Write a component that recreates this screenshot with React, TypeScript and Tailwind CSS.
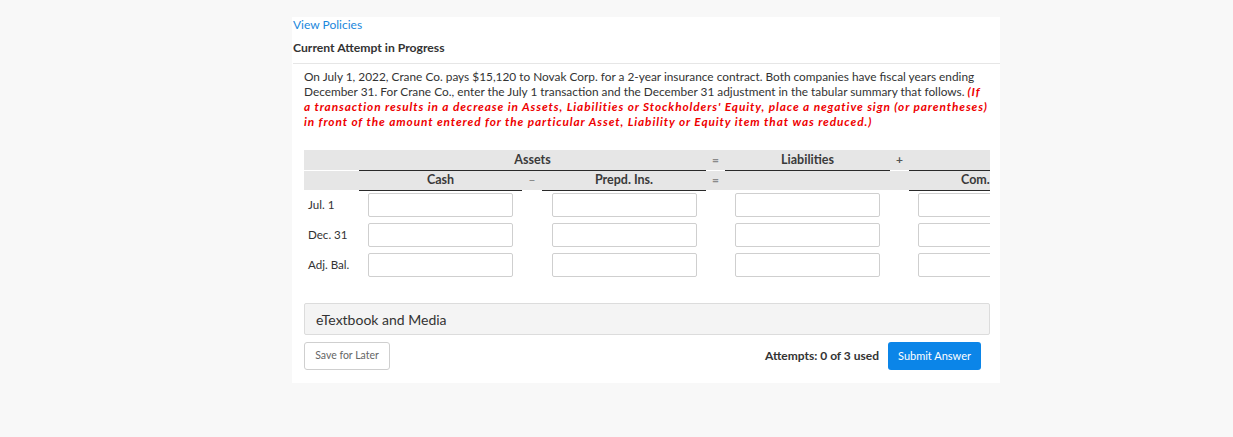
import React from 'react';

// Tabular summary grid: label | Cash | op | Prepd | op | Liabilities | op | Com.
const cols = 'grid grid-cols-[55px_163px_20px_164px_19px_165px_19px_163px]';

const rows = ['Jul. 1', 'Dec. 31', 'Adj. Bal.'];

const Op: React.FC<{ sym: string; tone?: string }> = ({ sym, tone = 'text-[#8a8a8a]' }) => (
  <div className={`flex items-center justify-center bg-[#e6e6e6] bg-clip-padding border-b border-transparent text-[12px] font-bold ${tone}`}>{sym}</div>
);

const Cell: React.FC<{ children?: React.ReactNode; line?: boolean; className?: string }> = ({ children, line, className = '' }) => (
  <div
    className={`flex items-center justify-center bg-[#e6e6e6] bg-clip-padding border-b text-[12.5px] font-bold text-[#3a3a3a] ${line ? 'border-[#2a2a2a]' : 'border-transparent'} ${className}`}
  >
    {children}
  </div>
);

const Box = () => (
  <div className="flex items-center justify-center">
    <input className="w-[145px] h-[24px] border border-[#cfcfcf] rounded-[2px] bg-white outline-none" />
  </div>
);

function App() {
  return (
    <div className="min-h-screen bg-[#f8f8f8] font-['Lato',sans-serif] text-[#333]">
      <div className="pt-[17px] pl-[292px]">
        <div className="w-[708px] bg-white pb-[13px]">
          {/* header */}
          <div className="pl-[1px] pt-[1px]">
            <a className="block text-[12px] leading-[14px] text-[#1a87dc]">View Policies</a>
            <div className="mt-[9px] text-[12.2px] leading-[14px] font-bold text-[#333]">Current Attempt in Progress</div>
          </div>
          <div className="mt-[8px] ml-[1px] border-t border-[#e6e6e6]" />

          <div className="pl-3 pr-[10px]">
            <p className="mt-[5px] text-[11.85px] leading-[15px] text-[#333]">
              On July 1, 2022, Crane Co. pays $15,120 to Novak Corp. for a 2-year insurance contract. Both companies have fiscal years ending
              December 31. For Crane Co., enter the July 1 transaction and the December 31 adjustment in the tabular summary that follows.{' '}
              <span className="font-bold italic tracking-[0.9px] text-[#ee0000]">
                (If a transaction results in a decrease in Assets, Liabilities or Stockholders' Equity, place a negative sign (or parentheses)
                in front of the amount entered for the particular Asset, Liability or Equity item that was reduced.)
              </span>
            </p>

            {/* tabular summary */}
            <div className="mt-[21px] w-[686px] overflow-hidden">
              <div className="w-[768px]">
                <div className={`${cols} h-[21px]`}>
                  <Cell />
                  <Cell line className="col-span-3">Assets</Cell>
                  <Op sym="=" />
                  <Cell line>Liabilities</Cell>
                  <Op sym="+" tone="text-[#555]" />
                  <Cell line />
                </div>
                <div className={`${cols} h-[19px]`}>
                  <Cell />
                  <Cell line>Cash</Cell>
                  <Op sym="–" />
                  <Cell line>Prepd. Ins.</Cell>
                  <Op sym="=" />
                  <Cell />
                  <Cell />
                  <Cell line className="!justify-start pl-[52px]">Com.</Cell>
                </div>
                {rows.map((r) => (
                  <div key={r} className={`${cols} h-[30px]`}>
                    <div className="flex items-center pl-[4px] text-[11.6px] text-[#333]">{r}</div>
                    <Box />
                    <div />
                    <Box />
                    <div />
                    <Box />
                    <div />
                    <Box />
                  </div>
                ))}
              </div>
            </div>

            <div className="mt-[23px] h-[32px] flex items-center pl-[11px] bg-[#f4f4f4] border border-[#dcdcdc] rounded-[2px] text-[14px] text-[#333]">
              eTextbook and Media
            </div>

            <div className="mt-[7px] flex items-center justify-between pr-[9px]">
              <button className="h-[28px] w-[86px] border border-[#cfcfcf] rounded-[3px] bg-white text-[10.5px] text-[#666]">Save for Later</button>
              <div className="flex items-center gap-[9px]">
                <span className="text-[12px] font-bold text-[#333]">Attempts: 0 of 3 used</span>
                <button className="h-[28px] w-[93px] rounded-[3px] bg-[#0b85e8] text-[11px] text-white">Submit Answer</button>
              </div>
            </div>
          </div>
        </div>
      </div>
    </div>
  );
}

export default App;
